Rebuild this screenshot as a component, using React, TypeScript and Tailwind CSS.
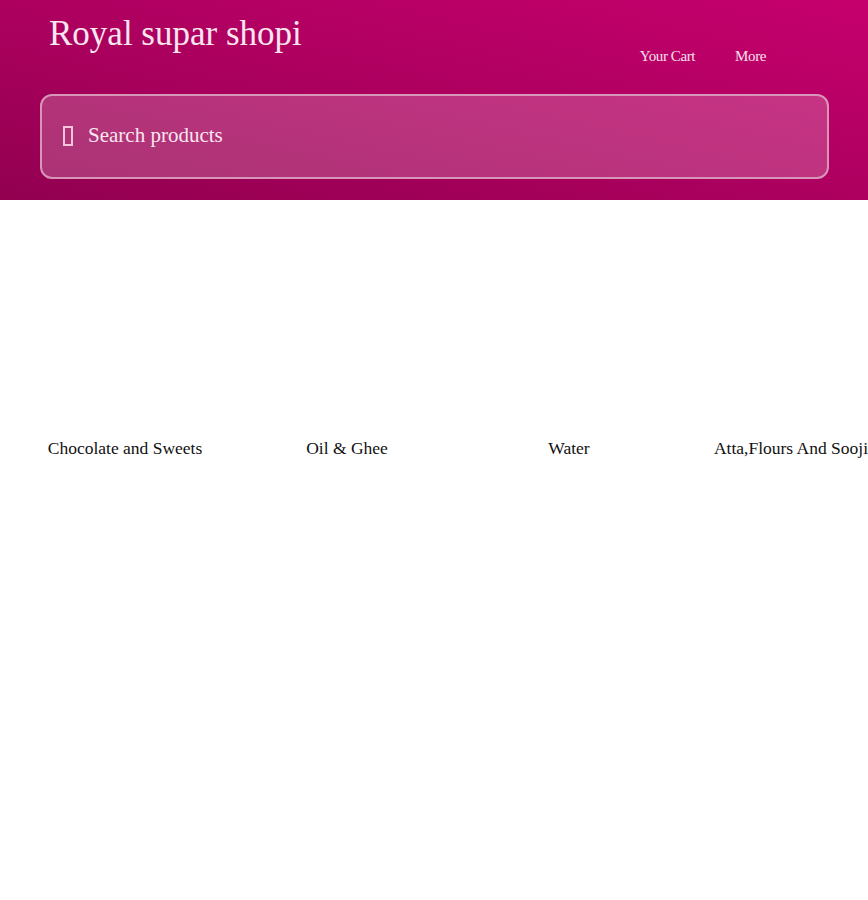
export default function App() {
  const categories = ["Chocolate and Sweets", "Oil & Ghee", "Water", "Atta,Flours And Sooji"]

  return (
    <div className="min-h-[900px] bg-white font-['Liberation_Serif',serif]">
      <header className="h-[200px] bg-gradient-to-tr from-[#920050] via-[#ad005f] to-[#c6006e] px-10 pt-[14px]">
        <div className="flex items-start justify-between">
          <h1 className="pl-[9px] text-[35px] leading-[40px] text-[#fbe6f0]">Royal supar shopi</h1>
          <nav className="mr-[62px] mt-[31px] flex gap-10 text-[15px] tracking-[-0.4px] text-[#fbe0ee]">
            <a>Your Cart</a>
            <a>More</a>
          </nav>
        </div>
        <div className="mt-[26px] flex h-[85px] w-[789px] items-center gap-[15px] rounded-xl border-2 border-[#d796b8] bg-white/20 pl-[21px]">
          <span className="block h-[20px] w-[10px] border-2 border-[#f3c4da]"></span>
          <span className="text-[21px] text-[#fbe6f0]">Search products</span>
        </div>
      </header>
      <div className="flex overflow-hidden pl-[14px] pt-[235px]">
        {categories.map((c) => (
          <div key={c} className="w-[222px] shrink-0 whitespace-nowrap text-center text-[17.5px] text-[#111]">
            {c}
          </div>
        ))}
      </div>
    </div>
  )
}
